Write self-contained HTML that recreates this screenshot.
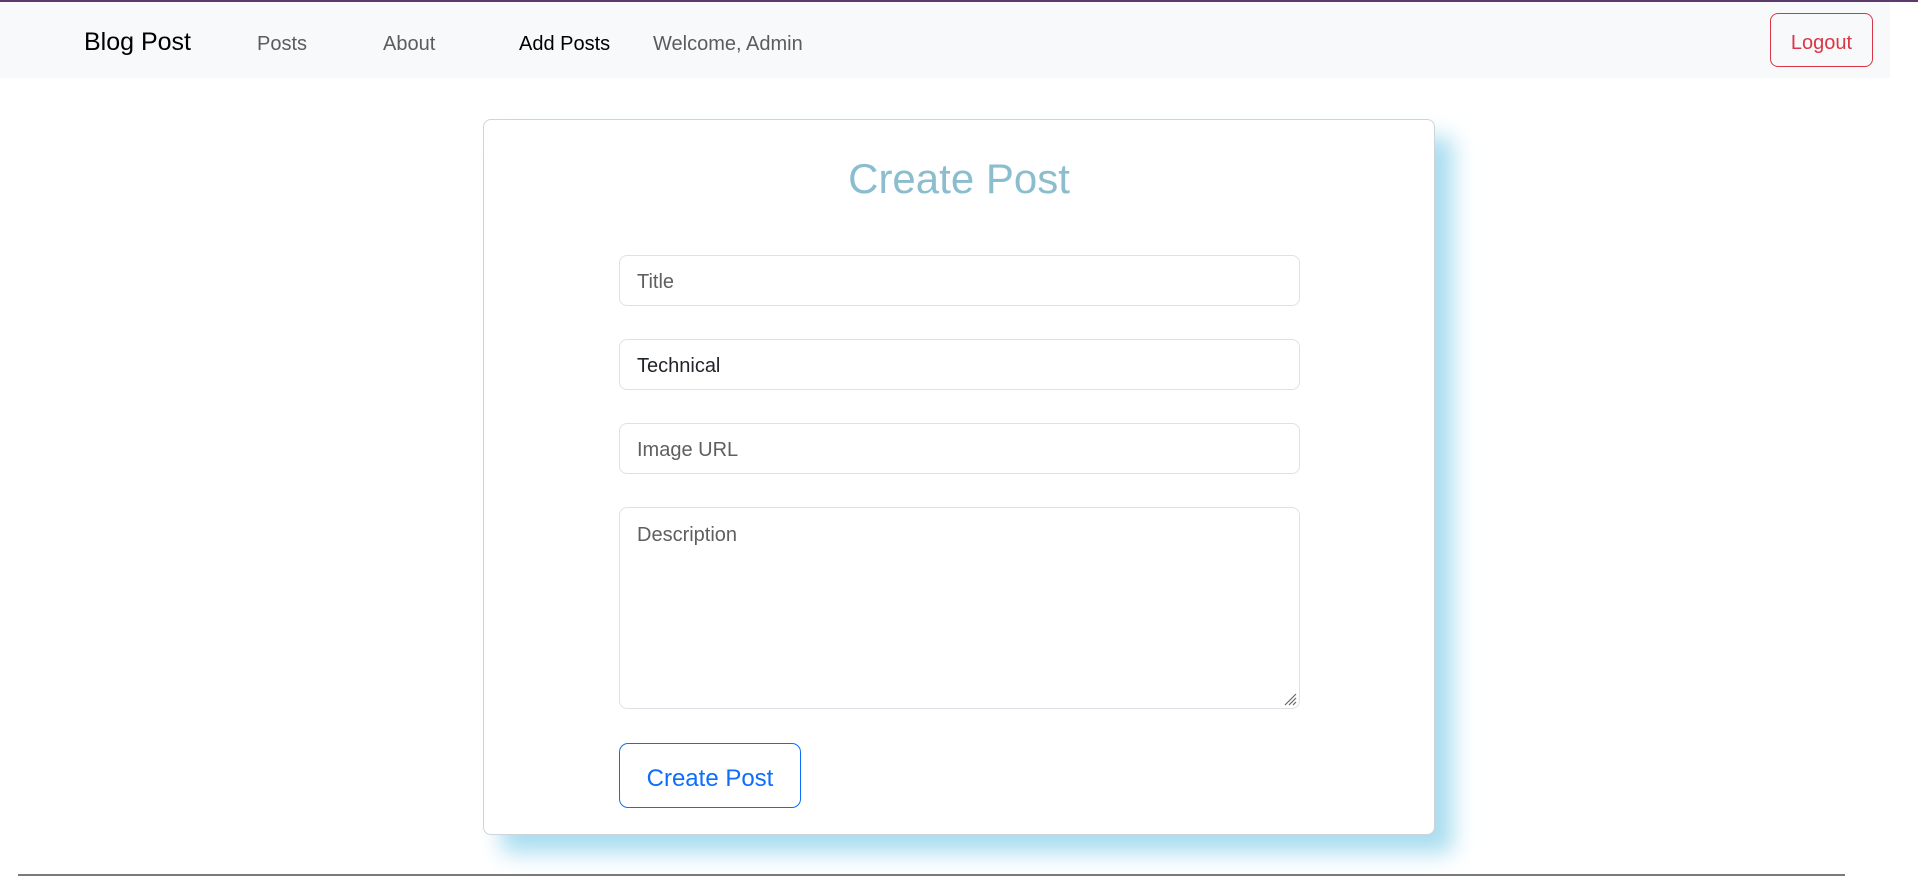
<!DOCTYPE html>
<html><head><style>
*{box-sizing:border-box;margin:0;padding:0}
body{width:1918px;height:877px;background:#fff;font-family:"Liberation Sans",sans-serif;position:relative;overflow:hidden;color:#212529}
.top{position:absolute;left:0;top:0;width:1918px;height:2px;background:#5b3b6f}
.nav{position:absolute;left:0;top:2px;width:1890px;height:76px;background:#f8f9fa}
.nav span{position:absolute;top:30px;font-size:20px;color:#5c5c5c;line-height:24px}
.brand{font-size:25px!important;color:#000!important;top:28px!important}
.logout{position:absolute;left:1770px;top:13px;width:103px;height:54px;border:1px solid #dc3545;border-radius:8px;color:#dc3545;font-size:20px;text-align:center;line-height:58px}
.card{position:absolute;left:483px;top:119px;width:952px;height:716px;border:1px solid #cfd4d8;border-radius:8px;background:#fff;box-shadow:18px 18px 22px rgba(140,210,235,.75)}
h1{position:absolute;left:0;width:100%;top:35px;text-align:center;font-weight:normal;font-size:42px;color:#8bbdcf}
.in{position:absolute;left:135px;width:681px;height:51px;border:1px solid #dee2e6;border-radius:8px;padding-left:17px;font-size:20px;line-height:53px;color:#5f5f5f}
.btn{position:absolute;left:135px;top:623px;width:182px;height:65px;border:1px solid #0d6efd;border-radius:9px;color:#0d6efd;font-size:24px;text-align:center;line-height:69px}
.line{position:absolute;left:18px;top:874px;width:1827px;height:2px;background:#7a7a7a}
</style></head><body>
<div class="top"></div>
<div class="nav">
<span class="brand" style="left:84px">Blog Post</span>
<span style="left:257px">Posts</span>
<span style="left:383px">About</span>
<span style="left:519px;color:#000">Add Posts</span>
<span style="left:653px">Welcome, Admin</span>
</div>
<div class="logout">Logout</div>
<div class="card">
<h1>Create Post</h1>
<div class="in" style="top:135px">Title</div>
<div class="in" style="top:219px;color:#212529">Technical</div>
<div class="in" style="top:303px">Image URL</div>
<div class="in" style="top:387px;height:202px;line-height:26px;padding-top:14px">Description
<svg style="position:absolute;right:2px;bottom:2px" width="14" height="14"><path d="M13 2L2 13M13 6L6 13M13 10L10 13" stroke="#666" stroke-width="1.2"/></svg></div>
<div class="btn">Create Post</div>
</div>
<div class="line"></div>
</body></html>
